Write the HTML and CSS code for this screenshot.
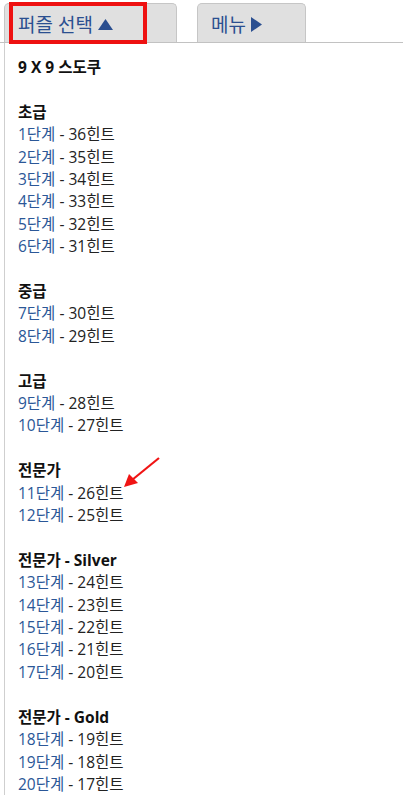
FILE: index.html
```html
<!DOCTYPE html>
<html lang="ko">

<head>
    <meta http-equiv='Content-Type' content='text/html; charset=utf-8' />
    <meta name='viewport' content='width=device-width' />
    <link rel="stylesheet" href="styles.css">
</head>

<body>
    <div class="topbar">
        <div class="tab tab-puzzle">
            퍼즐 선택
            <svg class="tri" width="15" height="11" viewBox="0 0 15 11"><polygon points="7.5,0 15,11 0,11" fill="#2b4f90"/></svg>
            <span class="mark"></span>
        </div>
        <div class="tab tab-menu">
            메뉴
            <svg class="tri" width="11" height="15" viewBox="0 0 11 15"><polygon points="0,0 11,7.5 0,15" fill="#2b4f90"/></svg>
        </div>
    </div>

    <div class="panel">
        <div class="group">
            <div class="head">9 X 9 스도쿠</div>
        </div>

        <div class="group">
            <div class="head">초급</div>
            <a class="lvl" href="#"><span>1단계</span> - 36힌트</a>
            <a class="lvl" href="#"><span>2단계</span> - 35힌트</a>
            <a class="lvl" href="#"><span>3단계</span> - 34힌트</a>
            <a class="lvl" href="#"><span>4단계</span> - 33힌트</a>
            <a class="lvl" href="#"><span>5단계</span> - 32힌트</a>
            <a class="lvl" href="#"><span>6단계</span> - 31힌트</a>
        </div>

        <div class="group">
            <div class="head">중급</div>
            <a class="lvl" href="#"><span>7단계</span> - 30힌트</a>
            <a class="lvl" href="#"><span>8단계</span> - 29힌트</a>
        </div>

        <div class="group">
            <div class="head">고급</div>
            <a class="lvl" href="#"><span>9단계</span> - 28힌트</a>
            <a class="lvl" href="#"><span>10단계</span> - 27힌트</a>
        </div>

        <div class="group">
            <div class="head">전문가</div>
            <a class="lvl" href="#"><span>11단계</span> - 26힌트
                <svg class="arrow" width="40" height="34" viewBox="0 0 40 34">
                    <line x1="37" y1="2" x2="10" y2="24" stroke="#f01414" stroke-width="2.2"/>
                    <polygon points="2,31 7,18 16,27" fill="#f01414"/>
                </svg>
            </a>
            <a class="lvl" href="#"><span>12단계</span> - 25힌트</a>
        </div>

        <div class="group">
            <div class="head">전문가 - Silver</div>
            <a class="lvl" href="#"><span>13단계</span> - 24힌트</a>
            <a class="lvl" href="#"><span>14단계</span> - 23힌트</a>
            <a class="lvl" href="#"><span>15단계</span> - 22힌트</a>
            <a class="lvl" href="#"><span>16단계</span> - 21힌트</a>
            <a class="lvl" href="#"><span>17단계</span> - 20힌트</a>
        </div>

        <div class="group">
            <div class="head">전문가 - Gold</div>
            <a class="lvl" href="#"><span>18단계</span> - 19힌트</a>
            <a class="lvl" href="#"><span>19단계</span> - 18힌트</a>
            <a class="lvl" href="#"><span>20단계</span> - 17힌트</a>
        </div>
    </div>
</body>

</html>
```

FILE: styles.css
```css
body {
    margin: 0;
    background-color: white;
    font-family: "Open Sans", "Noto Sans CJK KR", sans-serif;
    color: #222;
    overflow: hidden;
}

.topbar {
    display: flex;
    gap: 20px;
    padding: 3px 0 0 4px;
    border-bottom: 1px solid #c2c2c2;
}

.tab {
    position: relative;
    display: flex;
    align-items: center;
    gap: 5px;
    height: 39px;
    box-sizing: border-box;
    padding: 2px 0 0 13px;
    background-color: #e0e0e0;
    border: 1px solid #c6c6c6;
    border-bottom: none;
    border-radius: 5px 5px 0 0;
    color: #2b4f90;
    font-size: 19px;
}

.tab-puzzle {
    width: 173px;
}

.tab-menu {
    width: 109px;
}

.tri {
    display: block;
}

.tab-puzzle .tri {
    margin-top: 1px;
}

.mark {
    position: absolute;
    left: 4px;
    top: -2px;
    width: 138px;
    height: 42px;
    box-sizing: border-box;
    border: 4px solid #ee1111;
}

.panel {
    margin-left: 4px;
    border-left: 1px solid #cfcfcf;
    padding: 13px 0 0 13px;
    font-size: 15.5px;
    line-height: 22.4px;
}

.group {
    margin-bottom: 22.4px;
}

.head {
    font-size: 15.5px;
    font-weight: bold;
    color: #111;
}

.lvl {
    display: block;
    position: relative;
    width: max-content;
    color: #222;
    text-decoration: none;
}

.lvl span {
    color: #2b5797;
}

.arrow {
    position: absolute;
    left: 104px;
    top: -26px;
}
```
